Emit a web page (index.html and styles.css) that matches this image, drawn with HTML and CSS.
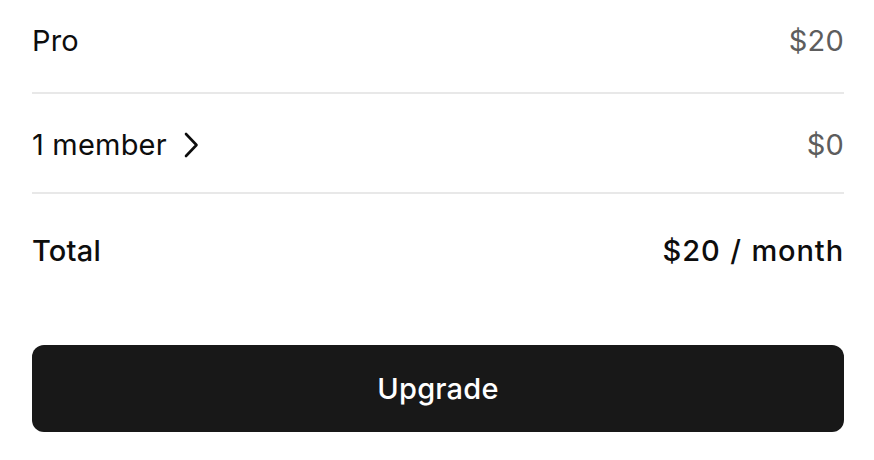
FILE: index.html
```html
<!DOCTYPE html>
<html>
<head>
<meta charset="utf-8">
<link rel="stylesheet" href="styles.css">
</head>
<body>
<div class="summary">
  <div class="row row-first">
    <span class="label">Pro</span>
    <span class="price">$20</span>
  </div>
  <div class="row row-second">
    <span class="label member">1 member
      <svg class="chev" width="18" height="26" viewBox="0 0 18 26" aria-hidden="true">
        <polyline points="4,2 14.5,13 4,24" fill="none" stroke="#0d0d0d" stroke-width="2.6" stroke-linecap="round" stroke-linejoin="round"/>
      </svg>
    </span>
    <span class="price">$0</span>
  </div>
  <div class="row row-total">
    <span class="label strong">Total</span>
    <span class="strong total-value">$20 / month</span>
  </div>
  <button class="upgrade">Upgrade</button>
</div>
</body>
</html>
```
FILE: styles.css
```css
html, body {
  margin: 0;
  padding: 0;
  background: #ffffff;
}
body {
  font-family: Inter, "Noto Sans", sans-serif;
  color: #0d0d0d;
}
.summary {
  padding: 0 30px 0 32px;
  display: flex;
  flex-direction: column;
}
.row {
  display: flex;
  justify-content: space-between;
  align-items: center;
  font-size: 29px;
  line-height: 38px;
  letter-spacing: 0.2px;
}
.row-first {
  padding: 22px 0 32px;
  border-bottom: 2px solid #e8e8e8;
}
.row-second {
  padding: 32px 0 28px;
  border-bottom: 2px solid #e8e8e8;
}
.row-total {
  padding: 38px 0 0;
}
.label {
  display: flex;
  align-items: center;
}
.member .chev {
  margin-left: 15px;
}
.price {
  color: #5d5d5d;
}
.strong {
  font-weight: 500;
}
.total-value {
  letter-spacing: 0.9px;
  word-spacing: 1px;
}
.upgrade {
  margin-top: 75px;
  height: 87px;
  border: none;
  border-radius: 12px;
  background: #181818;
  color: #ffffff;
  font-family: Inter, "Noto Sans", sans-serif;
  font-size: 29px;
  font-weight: 500;
  letter-spacing: 0.2px;
  cursor: pointer;
}
```
